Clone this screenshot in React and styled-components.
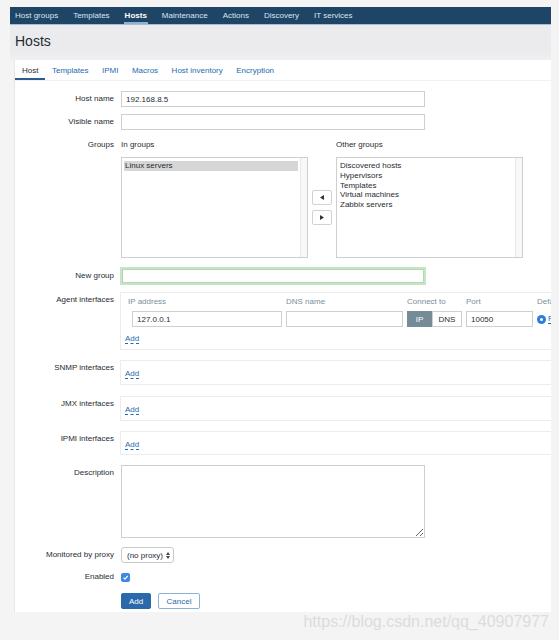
import React from 'react';
import styled, { createGlobalStyle } from 'styled-components';

const Global = createGlobalStyle`
  html, body { margin: 0; padding: 0; background: #f4f4f4; }
  body { font-family: "Liberation Sans", Arial, sans-serif; font-size: 8px; color: #1f2c33; }
  * { box-sizing: border-box; }
`;

const FONT = `"Liberation Sans", Arial, sans-serif`;
const BLUE = '#1e6bb0';

const Page = styled.div`
  width: 541px;
  margin-left: 10px;
  padding-top: 7px;
`;

const Nav = styled.nav`
  height: 18px;
  background: #1f4566;
  border-bottom: 1px solid #a9bcd2;
  display: flex;
  align-items: stretch;
  gap: 13px;
  padding-left: 4px;
`;

const NavItem = styled.a`
  display: flex;
  align-items: center;
  font-size: 8px;
  color: ${p => (p.$active ? '#ffffff' : '#dbe4ed')};
  font-weight: ${p => (p.$active ? 'bold' : 'normal')};
  box-shadow: ${p => (p.$active ? 'inset 0 -2px 0 #8fb2d4' : 'none')};
  padding: 0 1px;
  white-space: nowrap;
`;

const Header = styled.header`
  height: 35px;
  background: linear-gradient(#ebebed 0, #ebebed 76%, #f0f0f1 100%);
  display: flex;
  align-items: center;
  padding: 0 0 3px 5px;
`;

const Title = styled.h1`
  margin: 0;
  font-size: 14px;
  font-weight: normal;
  color: #1f2c33;
`;

const Card = styled.div`
  margin-left: 4px;
  border-left: 1px solid #e6e6e6;
  background: #fff;
  overflow: hidden;
  padding-bottom: 3px;
`;

const Tabs = styled.div`
  height: 21px;
  display: flex;
  border-bottom: 1px solid #f1f1f1;
`;

const Tab = styled.a`
  display: flex;
  align-items: center;
  padding: 0 6.5px 0 7px;
  font-size: 8px;
  color: ${p => (p.$active ? '#1f2c33' : BLUE)};
  box-shadow: ${p => (p.$active ? 'inset 0 -2px 0 #2b5e8d' : 'none')};
  white-space: nowrap;
`;

const Form = styled.div`
  padding-top: 10px;
`;

const Row = styled.div`
  display: grid;
  grid-template-columns: 99px 1fr;
  column-gap: 7px;
  margin-top: ${p => p.$mt || 0}px;
  align-items: start;
`;

const Label = styled.div`
  text-align: right;
  line-height: ${p => p.$lh || 16}px;
  font-size: 8px;
  white-space: nowrap;
  color: #1f2c33;
`;

const TextInput = styled.input`
  display: block;
  width: ${p => p.$w || 304}px;
  height: 16px;
  border: 1px solid #cfcfcf;
  border-radius: 0;
  padding: 0 0 0 4px;
  margin: 0;
  font: 8px ${FONT};
  color: #1f2c33;
  background: #fff;
  outline: none;
`;

const FocusInput = styled(TextInput)`
  margin-left: -1px;
  width: 306px;
  height: 18px;
  border: 2px solid #c6e4c6;
  box-shadow: inset 0 0 0 1px #b2d8b2;
`;

const Groups = styled.div`
  display: grid;
  grid-template-columns: 187px 20px 187px;
  grid-template-rows: 16px 101px;
  column-gap: 4px;
  row-gap: 4px;
`;

const GroupHead = styled.div`
  line-height: 16px;
  font-size: 8px;
  color: #1f2c33;
  grid-column: ${p => p.$col};
`;

const ListBox = styled.div`
  display: flex;
  border: 1px solid #cfcfcf;
  background: #fff;
`;

const ListItems = styled.div`
  flex: 1;
  padding: 3px 2px 0 2px;
`;

const ListItem = styled.div`
  line-height: 9.8px;
  padding-left: 1px;
  font-size: 8px;
  color: #1f2c33;
  background: ${p => (p.$sel ? '#d6d6d6' : 'transparent')};
`;

const ScrollTrack = styled.div`
  width: 7px;
  border-left: 1px solid #e8e8e8;
  background: #f8f8f8;
`;

const ArrowCol = styled.div`
  display: flex;
  flex-direction: column;
  justify-content: center;
  gap: 5px;
`;

const ArrowBtn = styled.div`
  width: 20px;
  height: 15px;
  border: 1px solid #d2d2d2;
  border-radius: 2px;
  background: #fff;
  display: flex;
  align-items: center;
  justify-content: center;
`;

const IfaceBox = styled.div`
  margin-left: -1px;
  width: 480px;
  height: ${p => (p.$h ? `${p.$h}px` : 'auto')};
  border: 1px solid #ececec;
  padding: ${p => (p.$table ? '4px 0 0 3px' : '8px 0 0 4px')};
`;

const IfaceGrid = styled.div`
  display: grid;
  grid-template-columns: 4px 150px 117px 55px 67px auto;
  grid-template-rows: 10px 16px;
  column-gap: 4px;
  row-gap: 4px;
  align-items: center;
`;

const ColHead = styled.div`
  line-height: 10px;
  font-size: 8px;
  color: #7c8d99;
  white-space: nowrap;
  overflow: hidden;
  grid-column: ${p => p.$span || 'auto'};
  padding-left: ${p => p.$pl || 0}px;
`;

const Handle = styled.div`
  width: 4px;
  height: 16px;
  background-image: radial-gradient(circle, #c2c2c2 45%, transparent 50%);
  background-size: 2px 2px;
`;

const Toggle = styled.div`
  display: flex;
  height: 16px;
`;

const ToggleSeg = styled.div`
  flex: ${p => (p.$on ? '0 0 25px' : '1')};
  display: flex;
  align-items: center;
  justify-content: center;
  font-size: 8px;
  background: ${p => (p.$on ? '#768b98' : '#fff')};
  color: ${p => (p.$on ? '#fff' : '#1f2c33')};
  border: 1px solid ${p => (p.$on ? '#768b98' : '#cfcfcf')};
`;

const RadioCell = styled.div`
  display: flex;
  align-items: center;
  gap: 2px;
  overflow: hidden;
`;

const Radio = styled.div`
  flex: 0 0 9px;
  width: 9px;
  height: 9px;
  border-radius: 50%;
  background: #2d7de0;
  display: flex;
  align-items: center;
  justify-content: center;
  &::after {
    content: '';
    width: 3px;
    height: 3px;
    border-radius: 50%;
    background: #fff;
  }
`;

const TinyLink = styled.span`
  font-size: 8px;
  color: ${BLUE};
  border-bottom: 1px dashed ${BLUE};
  white-space: nowrap;
`;

const AddLink = styled.a`
  display: block;
  width: fit-content;
  line-height: 9px;
  font-size: 8px;
  color: ${BLUE};
  border-bottom: 1px dashed ${BLUE};
  margin: ${p => (p.$table ? '7px 0 0 1px' : '0')};
`;

const TextArea = styled.textarea`
  display: block;
  width: 304px;
  height: 73px;
  border: 1px solid #cfcfcf;
  border-radius: 0;
  font: 8px ${FONT};
  outline: none;
  margin: 0;
  padding: 2px;
`;

const Select = styled.div`
  width: 53px;
  height: 16px;
  border: 1px solid #c9c9c9;
  border-radius: 3px;
  display: flex;
  align-items: center;
  justify-content: space-between;
  padding: 0 3px 0 5px;
  font-size: 8px;
  color: #1f2c33;
  background: #fff;
`;

const CheckCell = styled.div`
  height: 16px;
  display: flex;
  align-items: center;
`;

const Check = styled.div`
  width: 9px;
  height: 9px;
  border-radius: 2px;
  background: #3b88e6;
  display: flex;
  align-items: center;
  justify-content: center;
`;

const Buttons = styled.div`
  display: flex;
  gap: 7px;
`;

const Button = styled.button`
  display: block;
  height: 16px;
  width: ${p => p.$w}px;
  padding: 0;
  margin: 0;
  font: 8px ${FONT};
  border-radius: 2px;
  border: 1px solid ${p => (p.$primary ? '#2b69ab' : '#8db0d6')};
  background: ${p => (p.$primary ? '#2b69ab' : '#fff')};
  color: ${p => (p.$primary ? '#fff' : '#2b69ab')};
`;

const Watermark = styled.div`
  text-align: right;
  padding-right: 2px;
  font-size: 16px;
  line-height: 20px;
  color: #dcdcdc;
  font-family: ${FONT};
`;

const TriLeft = () => (
  <svg width="4" height="5" viewBox="0 0 4 5"><path d="M4 0 L0 2.5 L4 5 Z" fill="#333" /></svg>
);
const TriRight = () => (
  <svg width="4" height="5" viewBox="0 0 4 5"><path d="M0 0 L4 2.5 L0 5 Z" fill="#333" /></svg>
);

const navItems = ['Host groups', 'Templates', 'Hosts', 'Maintenance', 'Actions', 'Discovery', 'IT services'];
const tabs = ['Host', 'Templates', 'IPMI', 'Macros', 'Host inventory', 'Encryption'];
const otherGroups = ['Discovered hosts', 'Hypervisors', 'Templates', 'Virtual machines', 'Zabbix servers'];

export default function App() {
  return (
    <>
      <Global />
      <Page>
        <Nav>
          {navItems.map(n => (
            <NavItem key={n} $active={n === 'Hosts'}>{n}</NavItem>
          ))}
        </Nav>
        <Header><Title>Hosts</Title></Header>
        <Card>
          <Tabs>
            {tabs.map(t => (
              <Tab key={t} $active={t === 'Host'}>{t}</Tab>
            ))}
          </Tabs>
          <Form>
            <Row>
              <Label>Host name</Label>
              <TextInput readOnly defaultValue="192.168.8.5" />
            </Row>
            <Row $mt={7}>
              <Label>Visible name</Label>
              <TextInput readOnly defaultValue="" />
            </Row>
            <Row $mt={7}>
              <Label>Groups</Label>
              <Groups>
                <GroupHead $col="1">In groups</GroupHead>
                <GroupHead $col="3">Other groups</GroupHead>
                <ListBox>
                  <ListItems>
                    <ListItem $sel>Linux servers</ListItem>
                  </ListItems>
                  <ScrollTrack />
                </ListBox>
                <ArrowCol>
                  <ArrowBtn><TriLeft /></ArrowBtn>
                  <ArrowBtn><TriRight /></ArrowBtn>
                </ArrowCol>
                <ListBox>
                  <ListItems>
                    {otherGroups.map(g => <ListItem key={g}>{g}</ListItem>)}
                  </ListItems>
                  <ScrollTrack />
                </ListBox>
              </Groups>
            </Row>
            <Row $mt={9}>
              <Label $lh={18}>New group</Label>
              <FocusInput readOnly defaultValue="" />
            </Row>
            <Row $mt={7}>
              <Label>Agent interfaces</Label>
              <IfaceBox $table $h={58}>
                <IfaceGrid>
                  <ColHead $span="1 / 3" $pl={4}>IP address</ColHead>
                  <ColHead>DNS name</ColHead>
                  <ColHead>Connect to</ColHead>
                  <ColHead>Port</ColHead>
                  <ColHead>Default</ColHead>
                  <Handle />
                  <TextInput $w={150} readOnly defaultValue="127.0.0.1" />
                  <TextInput $w={117} readOnly defaultValue="" />
                  <Toggle>
                    <ToggleSeg $on>IP</ToggleSeg>
                    <ToggleSeg>DNS</ToggleSeg>
                  </Toggle>
                  <TextInput $w={67} readOnly defaultValue="10050" />
                  <RadioCell><Radio /><TinyLink>Remove</TinyLink></RadioCell>
                </IfaceGrid>
                <AddLink $table>Add</AddLink>
              </IfaceBox>
            </Row>
            <Row $mt={10}>
              <Label>SNMP interfaces</Label>
              <IfaceBox $h={25}><AddLink>Add</AddLink></IfaceBox>
            </Row>
            <Row $mt={11}>
              <Label>JMX interfaces</Label>
              <IfaceBox $h={25}><AddLink>Add</AddLink></IfaceBox>
            </Row>
            <Row $mt={10}>
              <Label>IPMI interfaces</Label>
              <IfaceBox $h={24}><AddLink>Add</AddLink></IfaceBox>
            </Row>
            <Row $mt={10}>
              <Label>Description</Label>
              <TextArea readOnly defaultValue="" />
            </Row>
            <Row $mt={9}>
              <Label>Monitored by proxy</Label>
              <Select>
                <span>(no proxy)</span>
                <svg width="4" height="7" viewBox="0 0 4 7">
                  <path d="M0 3 L2 0 L4 3 Z M0 4 L2 7 L4 4 Z" fill="#444" />
                </svg>
              </Select>
            </Row>
            <Row $mt={6}>
              <Label>Enabled</Label>
              <CheckCell>
                <Check>
                  <svg width="7" height="7" viewBox="0 0 7 7">
                    <path d="M1.5 3.7 L3 5.2 L5.7 1.8" stroke="#fff" strokeWidth="1.2" fill="none" />
                  </svg>
                </Check>
              </CheckCell>
            </Row>
            <Row $mt={8}>
              <div />
              <Buttons>
                <Button $primary $w={30}>Add</Button>
                <Button $w={42}>Cancel</Button>
              </Buttons>
            </Row>
          </Form>
        </Card>
        <Watermark>https://blog.csdn.net/qq_40907977</Watermark>
      </Page>
    </>
  );
}
